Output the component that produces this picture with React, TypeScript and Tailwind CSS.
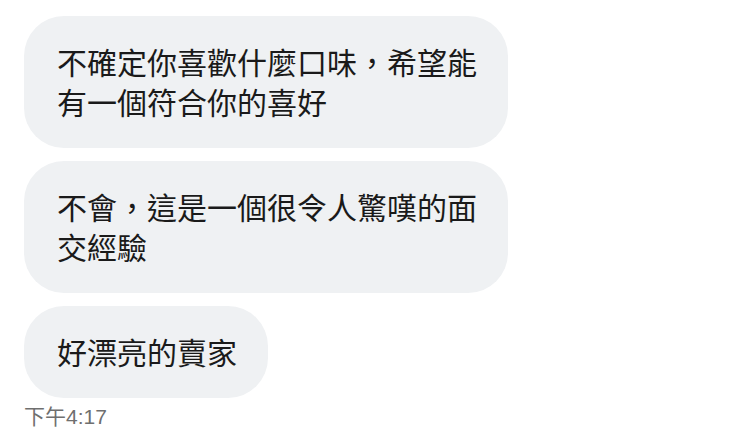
import React from 'react';

const messages = [
  '不確定你喜歡什麼口味，希望能有一個符合你的喜好',
  '不會，這是一個很令人驚嘆的面交經驗',
  '好漂亮的賣家',
];

export default function App() {
  return (
    <div
      className="w-[750px] h-[439px] bg-white flex flex-col items-start pt-[16px] pl-[24px]"
      style={{ fontFamily: '"Noto Sans CJK TC", "Noto Sans CJK SC", sans-serif' }}
    >
      {/* Incoming bubbles */}
      <div className="flex flex-col items-start gap-[13px]">
        {messages.map((msg, idx) => (
          <div
            key={idx}
            className="w-fit max-w-[484px] rounded-[40px] bg-[#eff1f3] pl-[33px] pr-[31px] pt-[25px] pb-[27px] text-[30px] leading-[40px] text-[#1a1a1a]"
          >
            {msg}
          </div>
        ))}
      </div>

      {/* Timestamp */}
      <div className="mt-[6px] text-[21px] leading-[25px] text-[#6f6f6f] font-['Liberation_Sans','Noto_Sans_CJK_TC',sans-serif]">
        下午4:17
      </div>
    </div>
  );
}
